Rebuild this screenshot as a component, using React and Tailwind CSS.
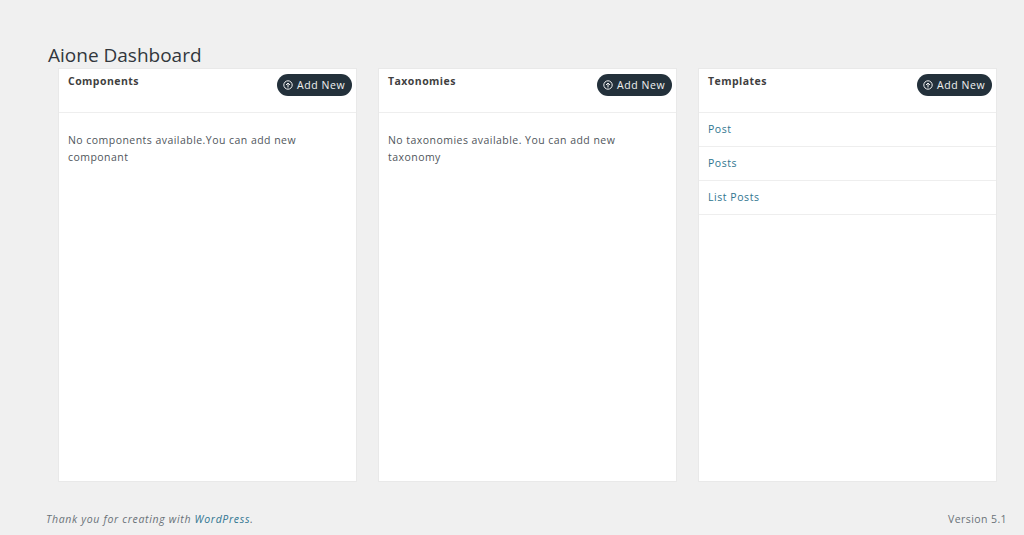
const font = { fontFamily: '"Open Sans", "Noto Sans", sans-serif' };

function AddNew() {
  return (
    <button className="flex items-center gap-[4px] h-[22px] w-[75px] pl-[6px] rounded-[11px] bg-[#23313b] text-[#f1f1f1] text-[10.5px] tracking-[0.6px] leading-none">
      <svg width="10" height="10" viewBox="0 0 10 10" fill="none" stroke="#f1f1f1" strokeWidth="1">
        <circle cx="5" cy="5" r="4.2" />
        <path d="M5 7.5V3M3 5l2-2 2 2" />
      </svg>
      Add New
    </button>
  );
}

function Card({ title, children }) {
  return (
    <section className="bg-white border border-[#e9e9e9] h-[414px] flex flex-col">
      <header className="h-[44px] shrink-0 border-b border-[#eeeeee] flex justify-between pl-[9px] pr-[4px]">
        <h2 className="text-[10.5px] font-bold text-[#3f3f3f] tracking-[0.45px] leading-none pt-[7px]">{title}</h2>
        <div className="pt-[5px]"><AddNew /></div>
      </header>
      {children}
    </section>
  );
}

function Message({ children }) {
  return <p className="pt-[19px] px-[9px] text-[10.5px] leading-[16.5px] tracking-[0.46px] text-[#50565c]">{children}</p>;
}

function Row({ children }) {
  return (
    <a className="block h-[34px] border-b border-[#eeeeee] pl-[9px] pt-[9px] text-[10.5px] leading-[14px] tracking-[0.55px] text-[#2f7590]">
      {children}
    </a>
  );
}

export default function App() {
  return (
    <div style={font} className="min-h-[535px] bg-[#f0f0f0] flex flex-col">
      <h1 className="pl-[48px] pt-[43px] h-[68px] text-[19px] leading-[24px] text-[#32373c]">Aione Dashboard</h1>
      <main className="grid grid-cols-3 gap-[21px] pl-[58px] pr-[27px]">
        <Card title="Components">
          <Message>No components available.You can add new componant</Message>
        </Card>
        <Card title="Taxonomies">
          <Message>No taxonomies available. You can add new taxonomy</Message>
        </Card>
        <Card title="Templates">
          <Row>Post</Row>
          <Row>Posts</Row>
          <Row>List Posts</Row>
        </Card>
      </main>
      <footer className="flex justify-between pl-[46px] pr-[17px] pt-[30px] text-[10.5px] leading-[14px] text-[#6a7278]">
        <span className="italic tracking-[0.68px]">Thank you for creating with <a className="text-[#2f7590]">WordPress</a>.</span>
        <span className="tracking-[0.42px]">Version 5.1</span>
      </footer>
    </div>
  );
}
